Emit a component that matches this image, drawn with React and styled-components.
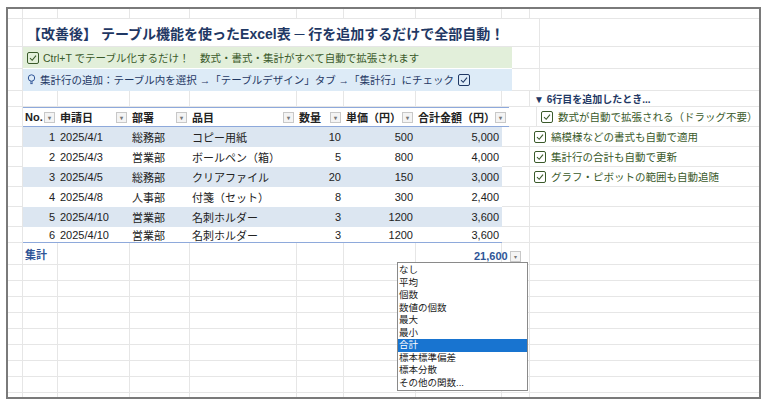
import React from "react";
import styled, { createGlobalStyle } from "styled-components";

const COLS = [15, 35, 72, 60, 107, 47, 72, 86, 28, 233];

const DATA = [
  [1, "2025/4/1", "総務部", "コピー用紙", 10, 500, "5,000"],
  [2, "2025/4/3", "営業部", "ボールペン（箱）", 5, 800, "4,000"],
  [3, "2025/4/5", "総務部", "クリアファイル", 20, 150, "3,000"],
  [4, "2025/4/8", "人事部", "付箋（セット）", 8, 300, "2,400"],
  [5, "2025/4/10", "営業部", "名刺ホルダー", 3, 1200, "3,600"],
  [6, "2025/4/10", "営業部", "名刺ホルダー", 3, 1200, "3,600"],
];

const HEADERS = ["No.", "申請日", "部署", "品目", "数量", "単価（円）", "合計金額（円）"];

const NOTES = [
  "数式が自動で拡張される（ドラッグ不要）",
  "縞模様などの書式も自動で適用",
  "集計行の合計も自動で更新",
  "グラフ・ピボットの範囲も自動追随",
];

const MENU = ["なし", "平均", "個数", "数値の個数", "最大", "最小", "合計", "標本標準偏差", "標本分散", "その他の関数..."];

const GlobalStyle = createGlobalStyle`
  body { margin: 0; background: #fff; font-family: "Liberation Sans", "Noto Sans CJK JP", sans-serif; }
`;

const Frame = styled.div`
  position: relative;
  margin: 7px 0 0 6px;
  width: 755px;
  height: 392px;
  border: 2px solid #7a7a7a;
  overflow: hidden;
  box-sizing: border-box;
`;

const Row = styled.div`
  display: flex;
  height: ${(p) => p.$h}px;
`;

const Cell = styled.div`
  flex: 0 0 ${(p) => p.$w}px;
  box-sizing: border-box;
  border-right: 1px solid #e6e6e6;
  border-bottom: 1px solid #e6e6e6;
  display: flex;
  align-items: center;
  overflow: visible;
  white-space: nowrap;
`;

const Span = styled.div`
  flex: 0 0 ${(p) => p.$w}px;
  box-sizing: border-box;
  display: flex;
  align-items: center;
  gap: 4px;
  padding-left: 4px;
  white-space: nowrap;
  background: ${(p) => p.$bg || "transparent"};
  color: ${(p) => p.$color || "#1f3864"};
  font-size: ${(p) => p.$fs || 11}px;
  font-weight: ${(p) => p.$fw || 400};
  border-bottom: 1px solid ${(p) => p.$bb || "#e6e6e6"};
`;

const TCell = styled.div`
  flex: 0 0 ${(p) => p.$w}px;
  box-sizing: border-box;
  display: flex;
  align-items: center;
  justify-content: ${(p) => (p.$right ? "flex-end" : "flex-start")};
  padding: 0 3px 0 2px;
  font-size: 11px;
  color: #222;
  white-space: nowrap;
  background: ${(p) => (p.$band ? "#dce6f1" : "#fff")};
  font-weight: ${(p) => (p.$bold ? 700 : 400)};
  border-bottom: ${(p) => (p.$bb ? `1px solid ${p.$bb}` : "none")};
  border-top: ${(p) => (p.$bt ? `1px solid ${p.$bt}` : "none")};
`;

const Filter = styled.span`
  margin-left: auto;
  width: 9px;
  height: 9px;
  border: 1px solid #c8c8c8;
  background: #f4f4f4;
  font-size: 6px;
  color: #777;
  display: inline-flex;
  align-items: center;
  justify-content: center;
  flex-shrink: 0;
`;

const Check = styled.span`
  width: 10px;
  height: 10px;
  border: 1px solid ${(p) => p.$c};
  border-radius: 2px;
  display: inline-flex;
  align-items: center;
  justify-content: center;
  flex-shrink: 0;
`;

const Note = styled.div`
  display: flex;
  align-items: center;
  gap: 5px;
  padding-left: 4px;
  font-size: 10.5px;
  color: #3a5a2a;
`;

const NoteHead = styled.div`
  padding-left: 4px;
  font-size: 10px;
  font-weight: 700;
  color: #1f3864;
`;

const Total = styled.span`
  color: #2f5597;
  font-weight: 700;
  font-size: 11px;
`;

const Menu = styled.div`
  position: absolute;
  left: 389px;
  top: 253px;
  width: 129px;
  border: 1px solid #8a8a8a;
  background: #fff;
  padding: 1px 0;
`;

const MenuItem = styled.div`
  height: 12.5px;
  line-height: 12.5px;
  font-size: 9.5px;
  padding-left: 1px;
  color: ${(p) => (p.$on ? "#fff" : "#222")};
  background: ${(p) => (p.$on ? "#1874d0" : "transparent")};
`;

const TotalBox = styled.div`
  position: absolute;
  left: 466px;
  top: 240px;
  height: 14px;
  display: flex;
  align-items: center;
  gap: 2px;
`;

const CheckIcon = ({ c }) => (
  <Check $c={c}>
    <svg width="8" height="8" viewBox="0 0 8 8">
      <path d="M1 4.2 L3.2 6.3 L7 1.6" fill="none" stroke={c} strokeWidth="1.1" />
    </svg>
  </Check>
);

const Bulb = () => (
  <svg width="9" height="11" viewBox="0 0 9 11">
    <circle cx="4.5" cy="4" r="3.2" fill="none" stroke="#2f5597" strokeWidth="1" />
    <path d="M3 8 H6 M3.3 9.6 H5.7" stroke="#2f5597" strokeWidth="1" />
  </svg>
);

const Blank = ({ from = 0, to }) => COLS.slice(from, to).map((w, i) => <Cell key={i} $w={w} />);

const BANNER_W = 489;

export default function App() {
  return (
    <>
      <GlobalStyle />
      <Frame>
        <Row $h={10}><Blank /></Row>
        <Row $h={28}>
          <Cell $w={15} />
          <Span $w={BANNER_W} $fs={14} $fw={700}>【改善後】 テーブル機能を使ったExcel表 ─ 行を追加するだけで全部自動！</Span>
          <Blank from={8} />
        </Row>
        <Row $h={22}>
          <Cell $w={15} />
          <Span $w={BANNER_W} $bg="#e2efda" $color="#3a5a2a" $fs={10.5} $bb="#fff">
            <CheckIcon c="#3a5a2a" />Ctrl+T でテーブル化するだけ！　数式・書式・集計がすべて自動で拡張されます
          </Span>
          <Blank from={8} />
        </Row>
        <Row $h={22}>
          <Cell $w={15} />
          <Span $w={BANNER_W} $bg="#ddebf7" $fs={10.5} $bb="#ddebf7">
            <Bulb />集計行の追加：テーブル内を選択 →「テーブルデザイン」タブ →「集計行」にチェック <CheckIcon c="#1f3864" />
          </Span>
          <Blank from={8} />
        </Row>
        <Row $h={16}>
          <Blank to={9} />
          <Cell $w={233}><NoteHead>▼ 6行目を追加したとき...</NoteHead></Cell>
        </Row>
        <Row $h={20}>
          <Cell $w={15} />
          {HEADERS.map((h, i) => (
            <TCell key={h} $w={COLS[i + 1]} $bold $bt="#8ea9db" $bb="#8ea9db">
              {h}<Filter>▾</Filter>
            </TCell>
          ))}
          <Cell $w={28} />
          <Cell $w={233}><Note><CheckIcon c="#3a5a2a" />{NOTES[0]}</Note></Cell>
        </Row>
        {DATA.map((r, ri) => (
          <Row key={ri} $h={ri === 5 ? 16 : 20}>
            <Cell $w={15} />
            {r.map((v, i) => (
              <TCell key={i} $w={COLS[i + 1]} $band={ri % 2 === 0} $right={[0, 4, 5, 6].includes(i)}
                $bb={ri === 5 ? "#8ea9db" : undefined}>
                {v}
              </TCell>
            ))}
            <Cell $w={28} />
            <Cell $w={233}>{NOTES[ri + 1] && <Note><CheckIcon c="#3a5a2a" />{NOTES[ri + 1]}</Note>}</Cell>
          </Row>
        ))}
        <Row $h={22}>
          <Cell $w={15} />
          <Cell $w={35}><Total style={{ paddingLeft: 2 }}>集計</Total></Cell>
          <Blank from={2} />
        </Row>
        {Array.from({ length: 9 }).map((_, i) => (
          <Row key={i} $h={16}><Blank /></Row>
        ))}
        <TotalBox>
          <Total>21,600</Total><Filter>▾</Filter>
        </TotalBox>
        <Menu>
          {MENU.map((m) => <MenuItem key={m} $on={m === "合計"}>{m}</MenuItem>)}
        </Menu>
      </Frame>
    </>
  );
}
